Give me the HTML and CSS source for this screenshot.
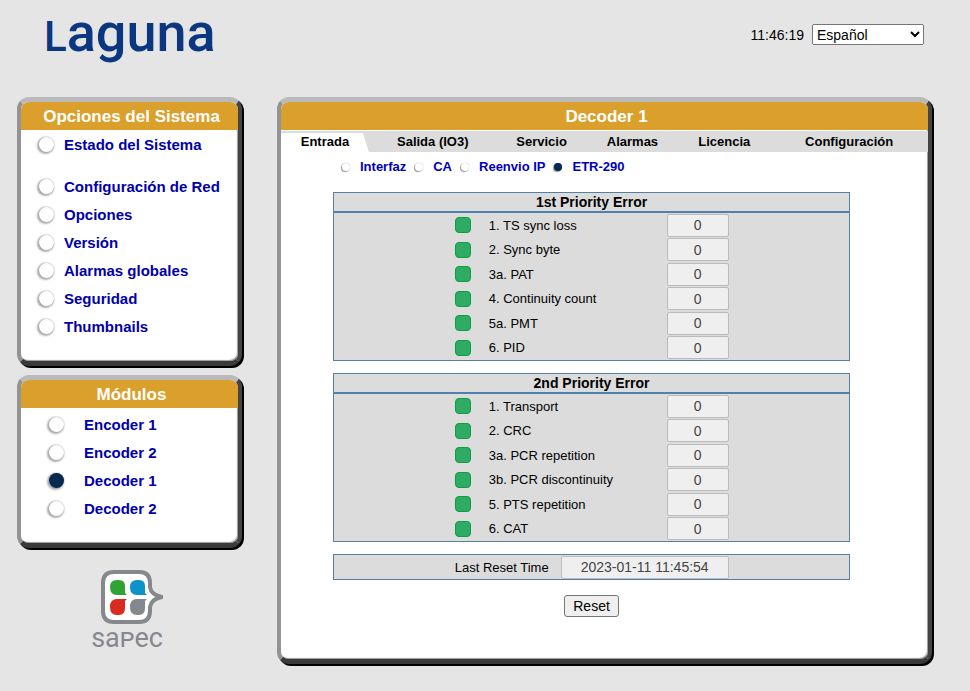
FILE: index.html
```html
<!DOCTYPE html>
<html lang="es">
<head>
    <meta charset="UTF-8">
    <meta name="viewport" content="width=device-width, initial-scale=1.0">
    <title>Laguna - Decoder 1</title>
    <link rel="stylesheet" href="styles.css">
</head>
<body>
    <header class="topbar">
        <h1 class="brand"><span class="brand-initial">L</span>aguna</h1>
        <div class="tools">
            <span class="clock">11:46:19</span>
            <select class="language" aria-label="Idioma">
                <option>Español</option>
                <option>English</option>
            </select>
        </div>
    </header>

    <div class="layout">
        <aside class="sidebar">
            <section class="panel">
                <h2 class="panel-title">Opciones del Sistema</h2>
                <div class="menu">
                    <label class="menu-item first"><input type="radio" name="menu">Estado del Sistema</label>
                    <label class="menu-item"><input type="radio" name="menu">Configuración de Red</label>
                    <label class="menu-item"><input type="radio" name="menu">Opciones</label>
                    <label class="menu-item"><input type="radio" name="menu">Versión</label>
                    <label class="menu-item"><input type="radio" name="menu">Alarmas globales</label>
                    <label class="menu-item"><input type="radio" name="menu">Seguridad</label>
                    <label class="menu-item"><input type="radio" name="menu">Thumbnails</label>
                </div>
            </section>

            <section class="panel">
                <h2 class="panel-title">Módulos</h2>
                <div class="menu modules">
                    <label class="menu-item"><input type="radio" name="menu">Encoder 1</label>
                    <label class="menu-item"><input type="radio" name="menu">Encoder 2</label>
                    <label class="menu-item"><input type="radio" name="menu" checked>Decoder 1</label>
                    <label class="menu-item"><input type="radio" name="menu">Decoder 2</label>
                </div>
            </section>

            <div class="company">
                <svg class="company-icon" width="62" height="54" viewBox="0 0 62 54" aria-hidden="true">
                    <path d="M13 2H38Q49 2 50 13V18Q51 24 61 25V29Q51 30 50 36V41Q49 52 38 52H13Q2 52 2 41V13Q2 2 13 2Z" fill="#fff"/>
                    <path d="M13 2H38Q49 2 49 13V17Q50 25 61 27Q50 29 49 37V41Q49 52 38 52H13Q2 52 2 41V13Q2 2 13 2Z" fill="none" stroke="#85888c" stroke-width="4" stroke-linejoin="round"/>
                    <path d="M16 10H18Q24 10 24 16V23L26 25H16Q9 25 9 17Q9 10 16 10Z" fill="#30a334"/>
                    <path d="M36 10H38Q44 10 44 16V23L46 25H36Q29 25 29 17Q29 10 36 10Z" fill="#0d93c8"/>
                    <path d="M16 29H26L24 31V38Q24 45 18 45H16Q9 45 9 37Q9 29 16 29Z" fill="#d82c20"/>
                    <path d="M36 29H46L44 31V38Q44 45 38 45H36Q29 45 29 37Q29 29 36 29Z" fill="#85888c"/>
                </svg>
                <span class="company-name">sa<span class="small-caps">p</span>ec</span>
            </div>
        </aside>

        <main class="panel main">
            <h2 class="panel-title">Decoder 1</h2>
            <nav class="tabs">
                <a href="#entrada" class="active">Entrada</a>
                <a href="#salida">Salida (IO3)</a>
                <a href="#servicio">Servicio</a>
                <a href="#alarmas">Alarmas</a>
                <a href="#licencia">Licencia</a>
                <a href="#configuracion">Configuración</a>
            </nav>

            <div class="subnav">
                <label><input type="radio" name="input">Interfaz</label>
                <label><input type="radio" name="input">CA</label>
                <label><input type="radio" name="input">Reenvio IP</label>
                <label><input type="radio" name="input" checked>ETR-290</label>
            </div>

            <div class="content">
                <table class="errors">
                    <colgroup><col class="col-led"><col class="col-name"><col></colgroup>
                    <thead>
                        <tr><th colspan="3">1st Priority Error</th></tr>
                    </thead>
                    <tbody>
                        <tr><td class="led-cell"><span class="led"></span></td><td><label for="e11">1. TS sync loss</label></td><td><input type="text" id="e11" value="0" readonly></td></tr>
                        <tr><td class="led-cell"><span class="led"></span></td><td><label for="e12">2. Sync byte</label></td><td><input type="text" id="e12" value="0" readonly></td></tr>
                        <tr><td class="led-cell"><span class="led"></span></td><td><label for="e13">3a. PAT</label></td><td><input type="text" id="e13" value="0" readonly></td></tr>
                        <tr><td class="led-cell"><span class="led"></span></td><td><label for="e14">4. Continuity count</label></td><td><input type="text" id="e14" value="0" readonly></td></tr>
                        <tr><td class="led-cell"><span class="led"></span></td><td><label for="e15">5a. PMT</label></td><td><input type="text" id="e15" value="0" readonly></td></tr>
                        <tr><td class="led-cell"><span class="led"></span></td><td><label for="e16">6. PID</label></td><td><input type="text" id="e16" value="0" readonly></td></tr>
                    </tbody>
                </table>

                <table class="errors">
                    <colgroup><col class="col-led"><col class="col-name"><col></colgroup>
                    <thead>
                        <tr><th colspan="3">2nd Priority Error</th></tr>
                    </thead>
                    <tbody>
                        <tr><td class="led-cell"><span class="led"></span></td><td><label for="e21">1. Transport</label></td><td><input type="text" id="e21" value="0" readonly></td></tr>
                        <tr><td class="led-cell"><span class="led"></span></td><td><label for="e22">2. CRC</label></td><td><input type="text" id="e22" value="0" readonly></td></tr>
                        <tr><td class="led-cell"><span class="led"></span></td><td><label for="e23">3a. PCR repetition</label></td><td><input type="text" id="e23" value="0" readonly></td></tr>
                        <tr><td class="led-cell"><span class="led"></span></td><td><label for="e24">3b. PCR discontinuity</label></td><td><input type="text" id="e24" value="0" readonly></td></tr>
                        <tr><td class="led-cell"><span class="led"></span></td><td><label for="e25">5. PTS repetition</label></td><td><input type="text" id="e25" value="0" readonly></td></tr>
                        <tr><td class="led-cell"><span class="led"></span></td><td><label for="e26">6. CAT</label></td><td><input type="text" id="e26" value="0" readonly></td></tr>
                    </tbody>
                </table>

                <div class="reset-time">
                    <label for="reset-time">Last Reset Time</label>
                    <input type="text" id="reset-time" value="2023-01-11 11:45:54" readonly>
                </div>

                <button type="button" class="reset">Reset</button>
            </div>
        </main>
    </div>
</body>
</html>
```

FILE: styles.css
```css
* {
    box-sizing: border-box;
}

body {
    margin: 0;
    background-color: #e5e5e5;
    font-family: "Liberation Sans", Arial, sans-serif;
    font-size: 13px;
    color: #000;
}

/* Top bar */
.topbar {
    display: flex;
    justify-content: space-between;
    align-items: flex-start;
    height: 97px;
    padding: 3px 46px 0 44px;
}

.brand {
    margin: 0;
    font-family: Roboto, sans-serif;
    font-size: 54px;
    font-weight: 500;
    line-height: 60px;
    color: #0b3780;
}

.brand-initial {
    font-size: 42px;
}

.tools {
    display: flex;
    align-items: center;
    gap: 8px;
    padding-top: 21px;
    font-size: 14px;
}

.language {
    width: 112px;
    height: 21px;
    padding: 0;
    font-family: inherit;
    font-size: 14px;
}

/* Panels */
.layout {
    display: flex;
    align-items: flex-start;
    gap: 35px;
    padding: 0 38px 0 17px;
}

.sidebar {
    flex: 0 0 225px;
}

.panel {
    border-style: solid;
    border-width: 5px 4px;
    border-color: #b9babc #444 #3a3a3a #939393;
    border-radius: 12px;
    background-color: #fff;
    box-shadow: 2px 2px 0 #000, inset -1px -1px 1px #999;
    margin-bottom: 9px;
}

.panel-title {
    margin: 0;
    border-radius: 8px 8px 0 0;
    background-color: #dba02c;
    color: #fff;
    font-size: 17px;
    line-height: 26px;
    padding: 2px 0 0 4px;
    text-align: center;
}

.main {
    flex: 1;
    min-width: 0;
}

/* Sidebar menus */
.menu {
    padding: 0 0 21px 18px;
}

.menu-item {
    display: flex;
    align-items: center;
    gap: 10px;
    height: 28px;
    font-size: 15px;
    font-weight: bold;
    color: #0000ac;
}

.menu-item.first {
    margin-bottom: 14px;
}

.modules {
    padding: 2px 0 21px 28px;
}

.modules .menu-item {
    gap: 20px;
}

input[type="radio"] {
    appearance: none;
    flex: none;
    width: 15px;
    height: 15px;
    margin: 0;
    border-radius: 50%;
    background-color: #fff;
    box-shadow: 0 0 1px #999, -1px 1px 2px 1px #aaa;
}

input[type="radio"]:checked {
    background-color: #06294f;
}

/* Company logo */
.company {
    display: flex;
    flex-direction: column;
    align-items: flex-end;
    width: 72px;
    margin: 22px 0 0 74px;
}

.company-name {
    font-family: Roboto, sans-serif;
    font-size: 27px;
    line-height: 28px;
    color: #85888c;
}

.small-caps {
    font-variant-caps: small-caps;
}

/* Tabs */
.tabs {
    display: grid;
    grid-template-columns: 88fr 128fr 90fr 92fr 92fr 158fr;
    margin-top: 1px;
    background-color: #dcdcdc;
}

.tabs a {
    color: #000;
    font-weight: bold;
    line-height: 21px;
    text-align: center;
    text-decoration: none;
}

.tabs .active {
    background-color: #fff;
    clip-path: polygon(0 10%, 93% 10%, 100% 100%, 0 100%);
}

.subnav {
    display: flex;
    gap: 9px;
    padding: 8px 0 0 61px;
}

.subnav label {
    display: flex;
    align-items: center;
    gap: 10px;
    line-height: 14px;
    font-weight: bold;
    color: #0000bb;
}

.subnav input[type="radio"] {
    width: 8px;
    height: 8px;
    box-shadow: 0 0 1px #999, -1px 1px 1px #999;
}

/* Error tables */
.content {
    width: 80%;
    margin: 18px 0 42px 8%;
}

.errors {
    width: 100%;
    margin-bottom: 12px;
    border: 1px solid #5480a2;
    border-spacing: 0;
    table-layout: fixed;
    background-color: #dcdcdc;
}

.col-led {
    width: 137px;
}

.col-name {
    width: 38%;
}

.errors th {
    padding: 0;
    border-bottom: 2px solid #4c83ad;
    font-size: 14px;
    line-height: 18px;
}

.errors td {
    height: 24px;
    padding: 0;
}

.errors tr:nth-child(even) td {
    height: 25px;
}

.errors td label {
    padding-left: 18px;
}

.led-cell {
    text-align: right;
}

.led {
    display: inline-block;
    width: 16px;
    height: 16px;
    border: 1px solid #0ba03c;
    border-radius: 4px;
    background-color: #2fab66;
    vertical-align: middle;
}

.content input {
    display: block;
    width: 62px;
    height: 23px;
    padding: 0;
    border: 1px solid #bbb;
    border-radius: 2px;
    background-color: #efefef;
    color: #444;
    font-family: inherit;
    font-size: 14px;
    text-align: center;
}

.reset-time {
    display: flex;
    align-items: center;
    gap: 12px;
    height: 26px;
    padding-left: 121px;
    border: 1px solid #5480a2;
    background-color: #dcdcdc;
}

.reset-time input {
    width: 168px;
}

.reset {
    display: block;
    margin: 15px auto 0;
    padding: 2px 8px;
    border: 1px solid #767676;
    border-radius: 3px;
    background-color: #efefef;
    font-family: inherit;
    font-size: 14px;
    line-height: 16px;
}
```
